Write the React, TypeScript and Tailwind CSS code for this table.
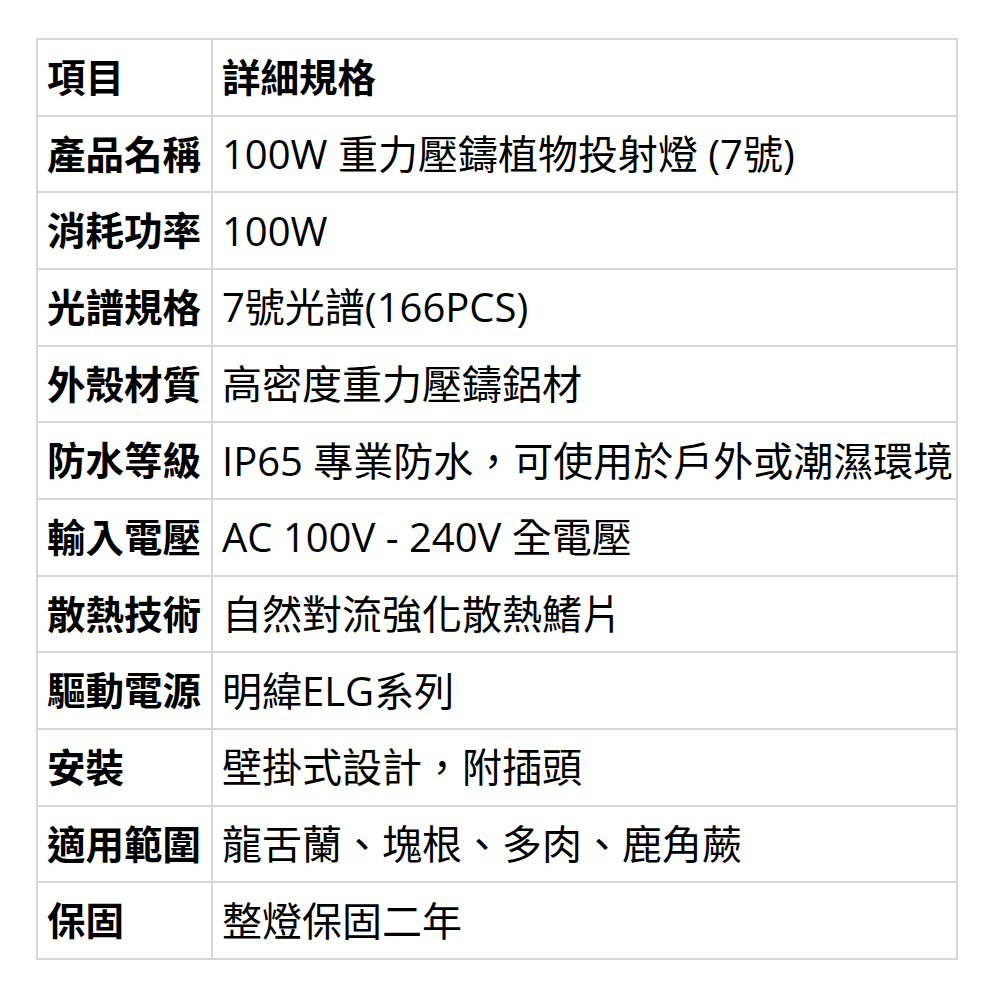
const ROWS: [string, string][] = [
  ["產品名稱", "100W 重力壓鑄植物投射燈 (7號)"],
  ["消耗功率", "100W"],
  ["光譜規格", "7號光譜(166PCS)"],
  ["外殼材質", "高密度重力壓鑄鋁材"],
  ["防水等級", "IP65 專業防水，可使用於戶外或潮濕環境"],
  ["輸入電壓", "AC 100V - 240V 全電壓"],
  ["散熱技術", "自然對流強化散熱鰭片"],
  ["驅動電源", "明緯ELG系列"],
  ["安裝", "壁掛式設計，附插頭"],
  ["適用範圍", "龍舌蘭、塊根、多肉、鹿角蕨"],
  ["保固", "整燈保固二年"],
];

export default function App() {
  return (
    <div className="h-[1000px] w-[1000px] bg-white pl-[36px] pt-[38px] font-['Open_Sans','Noto_Sans_CJK_TC',sans-serif] leading-none text-black">
      <table className="w-[922px] table-fixed border-collapse border-2 border-[#d6d6d6]">
        <colgroup>
          <col className="w-[175px]" />
          <col />
        </colgroup>
        <tbody>
          <tr className="h-[76.67px]">
            <th className="whitespace-nowrap border-2 border-[#d6d6d6] px-[9px] text-left text-[38.5px] font-bold">項目</th>
            <th className="whitespace-nowrap border-2 border-[#d6d6d6] px-[9px] text-left text-[38.5px] font-bold">詳細規格</th>
          </tr>
          {ROWS.map(([k, v]) => (
            <tr key={k} className="h-[76.67px]">
              <td className="whitespace-nowrap border-2 border-[#d6d6d6] px-[9px] text-[38.5px] font-bold">{k}</td>
              <td className="whitespace-nowrap border-2 border-[#d6d6d6] px-[9px] text-[40px]">{v}</td>
            </tr>
          ))}
        </tbody>
      </table>
    </div>
  );
}
